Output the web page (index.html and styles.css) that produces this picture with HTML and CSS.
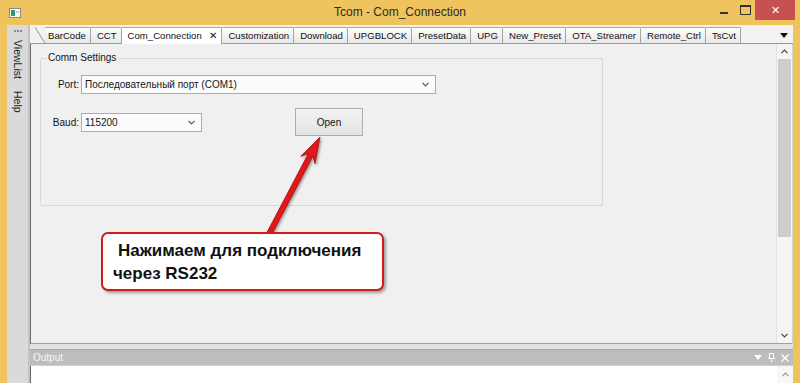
FILE: index.html
```html
<!DOCTYPE html>
<html lang="ru">
<head>
  <meta charset="UTF-8"/>
  <title>Tcom - Com_Connection</title>
  <link rel="stylesheet" href="styles.css">
</head>
<body>
<div class="window">

  <!-- Title bar -->
  <div class="titlebar">
    <svg class="app-icon" width="12" height="10" viewBox="0 0 12 10">
      <rect x="0.5" y="0.5" width="11" height="9" fill="#fafafa" stroke="#8a8a8a"/>
      <rect x="2" y="2" width="4" height="6" fill="#2f9a7a"/>
      <rect x="7" y="3" width="3" height="2" fill="#c9c9c9"/>
    </svg>
    <div class="title">Tcom - Com_Connection</div>
    <div class="controls">
      <span class="ctl min"></span>
      <span class="ctl max"></span>
      <span class="ctl close">✕</span>
    </div>
  </div>

  <div class="frame">
    <!-- Left dock strip -->
    <div class="sidebar">
      <div class="grip">
        <svg width="8" height="2" viewBox="0 0 8 2"><path d="M0 0h2v2H0zM3 0h2v2H3zM6 0h2v2H6z" fill="#8a8a8a"/></svg>
      </div>
      <div class="side-label">ViewList</div>
      <div class="side-label">Help</div>
    </div>

    <div class="workspace">
      <!-- Tabs -->
      <div class="tabs">
        <span class="tab-lead"></span>
        <span class="tab first">BarCode</span>
        <span class="tab">CCT</span>
        <span class="tab active">Com_Connection <i class="tab-x">✕</i></span>
        <span class="tab">Customization</span>
        <span class="tab">Download</span>
        <span class="tab">UPGBLOCK</span>
        <span class="tab">PresetData</span>
        <span class="tab">UPG</span>
        <span class="tab">New_Preset</span>
        <span class="tab">OTA_Streamer</span>
        <span class="tab">Remote_Ctrl</span>
        <span class="tab">TsCvt</span>
        <span class="tab-menu">
          <svg width="8" height="5" viewBox="0 0 8 5"><path d="M0 0H8L4 5Z" fill="#111"/></svg>
        </span>
      </div>

      <!-- Page -->
      <div class="page">
        <div class="page-body">
          <fieldset class="group">
            <legend>Comm Settings</legend>
            <div class="row">
              <label class="lbl">Port:</label>
              <div class="combo port">
                <span>Последовательный порт (COM1)</span>
                <svg width="7" height="5" viewBox="0 0 7 5"><path d="M0.5 0.8L3.5 3.8L6.5 0.8" fill="none" stroke="#555" stroke-width="1.2"/></svg>
              </div>
            </div>
            <div class="row">
              <label class="lbl">Baud:</label>
              <div class="combo baud">
                <span>115200</span>
                <svg width="7" height="5" viewBox="0 0 7 5"><path d="M0.5 0.8L3.5 3.8L6.5 0.8" fill="none" stroke="#555" stroke-width="1.2"/></svg>
              </div>
              <button class="btn">Open</button>
            </div>
          </fieldset>
        </div>
        <div class="vscroll">
          <div class="sb-btn">
            <svg width="7" height="5" viewBox="0 0 7 5"><path d="M0.5 4.2L3.5 1.2L6.5 4.2" fill="none" stroke="#444" stroke-width="1.2"/></svg>
          </div>
          <div class="thumb"></div>
          <div class="sb-space"></div>
          <div class="sb-btn">
            <svg width="7" height="5" viewBox="0 0 7 5"><path d="M0.5 0.8L3.5 3.8L6.5 0.8" fill="none" stroke="#444" stroke-width="1.2"/></svg>
          </div>
        </div>
      </div>

      <!-- Output dock -->
      <div class="dock">
        <div class="dock-head">
          <span>Output</span>
          <span class="dock-tools">
            <svg width="8" height="5" viewBox="0 0 8 5"><path d="M0 0H8L4 5Z" fill="#fff"/></svg>
            <svg width="7" height="9" viewBox="0 0 7 9"><path d="M1.5 0.5H5.5V5.5H1.5Z M0 5.5H7 M3.5 5.5V9" fill="none" stroke="#fff" stroke-width="1"/></svg>
            <svg width="8" height="8" viewBox="0 0 8 8"><path d="M0.5 0.5L7.5 7.5M7.5 0.5L0.5 7.5" stroke="#fff" stroke-width="1.3"/></svg>
          </span>
        </div>
        <div class="dock-body">
          <div class="dock-scroll">
            <svg width="7" height="5" viewBox="0 0 7 5"><path d="M0.5 4.2L3.5 1.2L6.5 4.2" fill="none" stroke="#999" stroke-width="1.2"/></svg>
          </div>
        </div>
      </div>
    </div>
  </div>

  <!-- Annotation drawn over the screenshot -->
  <div class="annotation">
    <svg class="arrow" width="800" height="383" viewBox="0 0 800 383">
      <defs>
        <filter id="shadow" x="-20%" y="-20%" width="140%" height="140%">
          <feDropShadow dx="1.5" dy="1.5" stdDeviation="1.2" flood-color="#000" flood-opacity="0.35"/>
        </filter>
      </defs>
      <polygon filter="url(#shadow)" fill="#e3161b" stroke="#a10d0d" stroke-width="0.8"
        points="320,137 315,163.7 313,155.9 265.6,246.2 261,243.8 308.4,153.5 300.8,156.3"/>
    </svg>
    <div class="callout">Нажимаем для подключения<br>через RS232</div>
  </div>
</div>
</body>
</html>
```

FILE: styles.css
```css
* {
  box-sizing: border-box;
}

body {
  margin: 0;
  font-family: 'Liberation Sans', Arial, sans-serif;
  font-size: 10px;
  color: #151515;
  background: #efc35e;
}

.window {
  position: relative;
  width: 800px;
  height: 383px;
  display: flex;
  flex-direction: column;
  overflow: hidden;
  background: #efc35e;
}

/* title bar */

.titlebar {
  height: 25px;
  display: grid;
  grid-template-columns: 1fr auto 1fr;
  align-items: start;
}

.app-icon {
  margin: 8px 0 0 9px;
}

.title {
  font-size: 12px;
  line-height: 25px;
  color: #2b2b2b;
}

.controls {
  justify-self: end;
  display: flex;
  margin-right: 5px;
}

.ctl {
  height: 20px;
  display: flex;
  align-items: center;
  justify-content: center;
}

.ctl.min {
  width: 25px;
}

.ctl.min::before {
  content: "";
  width: 8px;
  height: 2px;
  margin-top: 6px;
  background: #333;
}

.ctl.max {
  width: 19px;
}

.ctl.max::before {
  content: "";
  width: 9px;
  height: 7px;
  border: 1px solid #333;
  border-top-width: 2px;
}

.ctl.close {
  width: 40px;
  background: #c75050;
  color: #fff;
  font-size: 11px;
}

/* frame */

.frame {
  flex: 1;
  display: flex;
  min-height: 0;
  padding: 0 7px;
}

.sidebar {
  width: 23px;
  background: #dadada;
  border-right: 2px solid #c3c3c3;
  display: flex;
  flex-direction: column;
  align-items: center;
}

.grip {
  height: 15px;
  display: flex;
  align-items: center;
  padding-bottom: 4px;
}

.side-label {
  writing-mode: vertical-rl;
  font-size: 10.5px;
  color: #222;
}

.side-label + .side-label {
  margin-top: 12px;
}

.workspace {
  flex: 1;
  min-width: 0;
  display: flex;
  flex-direction: column;
}

/* tabs */

.tabs {
  height: 19px;
  display: flex;
  align-items: flex-end;
  padding-left: 5px;
  background: #f2f2f2;
  border-bottom: 1px solid #9a9a9a;
}

.tab-lead {
  width: 10px;
  height: 16px;
  background: linear-gradient(to top right, #f2f2f2 calc(50% - 1px), #9a9a9a 50%, #f7f7f7 calc(50% + 1px), #e9e9e9);
}

.tab {
  height: 16px;
  line-height: 15px;
  padding: 0 4px 0 6px;
  font-size: 9.6px;
  white-space: nowrap;
  color: #111;
  background: linear-gradient(#fdfdfd, #e8e8e8);
  border-top: 1px solid #a5a5a5;
  border-right: 1px solid #a5a5a5;
  border-top-right-radius: 2px;
}

.tab.first {
  padding-left: 3px;
}

.tab.active {
  height: 17px;
  margin-bottom: -1px;
  background: #fff;
}

.tab-x {
  font-style: normal;
  margin-left: 5px;
}

.tab-menu {
  margin-left: auto;
  width: 18px;
  height: 16px;
  display: flex;
  align-items: center;
  justify-content: center;
}

/* page */

.page {
  flex: 1;
  min-height: 0;
  display: flex;
  background: #f0f0f0;
  border-left: 1px solid #6a6a6a;
  border-right: 1px solid #d5d5d5;
  border-bottom: 1px solid #a0a0a0;
}

.page-body {
  flex: 1;
  padding: 8px 0 0 9px;
}

.group {
  width: 563px;
  height: 154px;
  margin: 0;
  min-width: 0;
  padding: 11px 0 0 6px;
  border: 1px solid #d8d8d8;
  border-radius: 2px;
}

.group legend {
  padding: 0 1px;
  line-height: 12px;
}

.row {
  display: flex;
  align-items: center;
}

.row + .row {
  margin-top: 14px;
}

.lbl {
  width: 32px;
  margin-right: 2px;
  text-align: right;
}

.combo {
  height: 19px;
  display: flex;
  align-items: center;
  justify-content: space-between;
  padding: 0 6px 0 3px;
  background: #fbfbfb;
  border: 1px solid #acacac;
}

.combo.port {
  width: 355px;
}

.combo.baud {
  width: 121px;
}

.btn {
  width: 68px;
  height: 28px;
  margin-left: 93px;
  padding: 0;
  font: inherit;
  color: #111;
  background: linear-gradient(#f3f3f3, #e2e2e2);
  border: 1px solid #adadad;
}

.vscroll {
  width: 16px;
  display: flex;
  flex-direction: column;
  align-items: center;
  background: #f4f4f4;
  border-left: 1px solid #e4e4e4;
}

.sb-btn {
  height: 15px;
  width: 100%;
  display: flex;
  align-items: center;
  justify-content: center;
}

.thumb {
  width: 13px;
  height: 178px;
  background: #cdcdcd;
}

.sb-space {
  flex: 1;
}

/* output dock */

.dock {
  height: 39px;
  display: flex;
  flex-direction: column;
  padding-top: 5px;
  background: #e2e2e2;
}

.dock-head {
  height: 17px;
  display: flex;
  align-items: center;
  padding-left: 3px;
  color: #f7f7f7;
  background: #bdbdbd;
  border-top: 1px solid #aaa;
  border-bottom: 1px solid #cfcfcf;
}

.dock-tools {
  margin-left: auto;
  display: flex;
  align-items: center;
  gap: 6px;
  margin-right: 4px;
}

.dock-body {
  flex: 1;
  display: flex;
  justify-content: flex-end;
  background: #fff;
  border-left: 1px solid #6a6a6a;
}

.dock-scroll {
  width: 16px;
  display: flex;
  justify-content: center;
  padding-top: 6px;
  background: #f7f7f7;
}

/* annotation */

.annotation {
  position: absolute;
  top: 0;
  left: 0;
  width: 800px;
  height: 383px;
  pointer-events: none;
}

.arrow {
  position: absolute;
  top: 0;
  left: 0;
}

.callout {
  position: absolute;
  left: 101px;
  top: 232px;
  width: 283px;
  height: 59px;
  padding: 5px 0 0 10px;
  font-size: 17px;
  font-weight: bold;
  line-height: 23px;
  text-indent: 5px;
  color: #111;
  background: #fff;
  border: 2px solid #d01c1c;
  border-radius: 7px;
  box-shadow: 2px 2px 3px rgba(0, 0, 0, 0.35);
}
```
